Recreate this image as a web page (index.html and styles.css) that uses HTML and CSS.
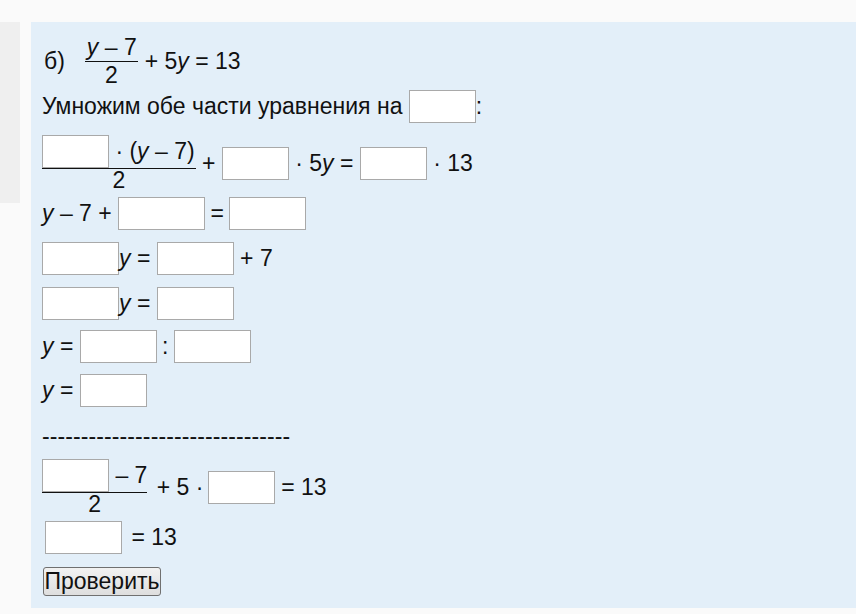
FILE: index.html
```html
<!DOCTYPE html>
<html lang="ru">
<head>
<meta charset="utf-8">
<title>Уравнение</title>
<link rel="stylesheet" href="styles.css">
</head>
<body>
<div class="page">
  <div class="side"></div>
  <div class="panel">
    <div class="row r1">
      <span class="lbl">б)</span>
      <span class="frac f1"><span class="num"><i>y</i> – 7</span><span class="den">2</span></span>
      <span class="after1">+ 5<i>y</i> = 13</span>
    </div>
    <div class="row r2">
      <span>Умножим обе части уравнения на&nbsp;</span><input class="box w67" type="text"><span>:</span>
    </div>
    <div class="row r3">
      <span class="frac"><span class="num"><input class="box w67" type="text"><span>&nbsp;· (<i>y</i> – 7)</span></span><span class="den">2</span></span>
      <span class="op">&nbsp;+&nbsp;</span><input class="box w67" type="text"><span>&nbsp;· 5<i>y</i> =&nbsp;</span><input class="box w67" type="text"><span>&nbsp;· 13</span>
    </div>
    <div class="row r4">
      <span><i>y</i> – 7 +&nbsp;</span><input class="box w87" type="text"><span class="eq4">&nbsp;=&nbsp;</span><input class="box w77" type="text">
    </div>
    <div class="row r5">
      <input class="box w77" type="text"><span><i>y</i> =&nbsp;</span><input class="box w77" type="text"><span>&nbsp;+ 7</span>
    </div>
    <div class="row r6">
      <input class="box w77" type="text"><span><i>y</i> =&nbsp;</span><input class="box w77" type="text">
    </div>
    <div class="row r7">
      <span><i>y</i> =&nbsp;</span><input class="box w77" type="text"><span class="colon">&nbsp;:&nbsp;</span><input class="box w77" type="text">
    </div>
    <div class="row r8">
      <span><i>y</i> =&nbsp;</span><input class="box w67" type="text">
    </div>
    <div class="row dashes">--------------------------------</div>
    <div class="row r9">
      <span class="frac"><span class="num"><input class="box w67" type="text"><span>&nbsp;– 7</span></span><span class="den">2</span></span>
      <span class="plus9">&nbsp;+ 5 ·&nbsp;</span><input class="box w67" type="text"><span>&nbsp;= 13</span>
    </div>
    <div class="row r10">
      <input class="box w77" type="text"><span class="eq10">&nbsp;= 13</span>
    </div>
    <div class="row r11">
      <button class="btn" type="button">Проверить</button>
    </div>
  </div>
</div>
</body>
</html>
```

FILE: styles.css
```css
html, body {
  margin: 0;
  padding: 0;
  background: #fafafa;
}
body {
  font-family: "Liberation Sans", Arial, sans-serif;
  font-size: 23px;
  color: #111;
  width: 856px;
  height: 614px;
  overflow: hidden;
}
.page {
  display: flex;
  align-items: flex-start;
  padding-top: 22px;
  gap: 11px;
}
.side {
  width: 20px;
  height: 181px;
  background: #efefef;
}
.panel {
  flex: 1;
  height: 586px;
  background: #e3eff9;
  padding: 14px 0 0 11px;
  box-sizing: border-box;
  display: flex;
  flex-direction: column;
}
.row {
  display: flex;
  align-items: center;
  white-space: pre;
  line-height: 23px;
}
i {
  font-style: italic;
}
.box {
  box-sizing: border-box;
  height: 33px;
  margin: 0;
  padding: 0;
  border: 1px solid #a9a9a9;
  background: #fff;
  font: inherit;
}
.w67 { width: 67px; }
.w77 { width: 77px; }
.w87 { width: 87px; }
.frac {
  display: inline-flex;
  flex-direction: column;
  align-items: stretch;
}
.num {
  display: flex;
  align-items: center;
  border-bottom: 1px solid #111;
}
.den {
  text-align: center;
  line-height: 23px;
}
.lbl {
  margin-left: 2px;
  margin-right: 20px;
}
.f1 .num {
  padding: 0 1px 0 2px;
  height: 25px;
  align-items: flex-start;
}
.f1 .den {
  padding-top: 2px;
}
.after1 {
  margin-left: 7px;
}
.r2 { margin-top: 3px; }
.r3 { margin-top: 12px; }
.r3 .num { padding-right: 1px; }
.r4 { margin-top: 5px; }
.eq4 { margin-left: -1px; margin-right: -1px; }
.r5 { margin-top: 12px; }
.r6 { margin-top: 12px; }
.r7 { margin-top: 10px; }
.colon { margin-left: -1px; margin-right: -1px; }
.r8 { margin-top: 11px; }
.dashes { margin-top: 18px; letter-spacing: 0.1px; }
.r9 { margin-top: 11px; }
.plus9 { margin-left: 3px; margin-right: -2px; }
.r10 { margin-top: 5px; margin-left: 3px; }
.eq10 { margin-left: 3px; }
.r11 { margin-top: 13px; margin-left: 1px; }
.btn {
  height: 29px;
  width: 118px;
  padding: 0;
  font: inherit;
  line-height: 27px;
  color: #111;
  border: 1px solid #707070;
  border-radius: 3px;
  background: linear-gradient(#f2f2f2, #dedede);
}
```
